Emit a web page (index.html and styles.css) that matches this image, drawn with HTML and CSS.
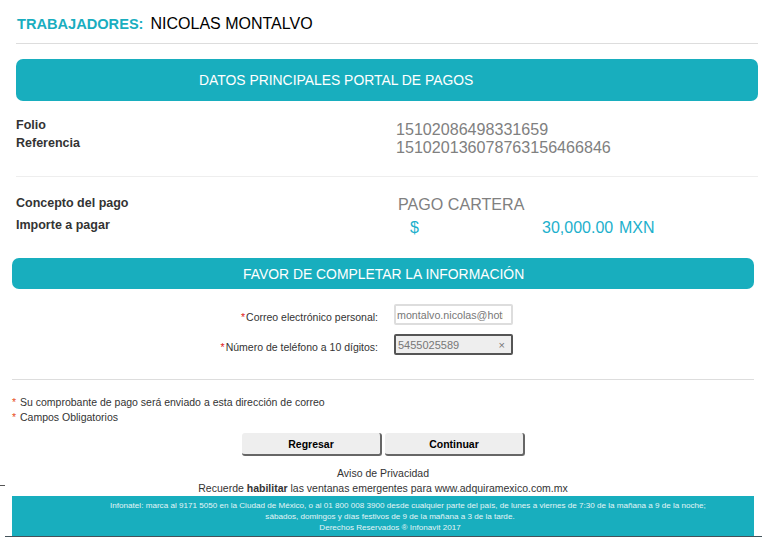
FILE: index.html
```html
<!DOCTYPE html>
<html lang="es">

<head>
  <meta charset="UTF-8">
  <meta name="viewport" content="width=device-width, initial-scale=1.0">
  <title>Portal de Pagos</title>
  <link rel="stylesheet" href="styles.css">
</head>

<body>
  <header class="titulo">
    <span class="titulo-label">TRABAJADORES:</span>
    <span class="titulo-nombre">NICOLAS MONTALVO</span>
  </header>

  <h2 class="banda banda-datos">DATOS PRINCIPALES PORTAL DE PAGOS</h2>

  <section class="fila fila-folio">
    <div class="etiquetas">
      <div>Folio</div>
      <div>Referencia</div>
    </div>
    <div class="valores">
      <div>15102086498331659</div>
      <div>151020136078763156466846</div>
    </div>
  </section>

  <section class="fila fila-pago">
    <div class="etiquetas">
      <div>Concepto del pago</div>
      <div>Importe a pagar</div>
    </div>
    <div class="pago">
      <div class="concepto">PAGO CARTERA</div>
      <div class="importe">
        <span class="signo">$</span>
        <span class="monto">30,000.00</span>
        <span class="moneda">MXN</span>
      </div>
    </div>
  </section>

  <h2 class="banda banda-favor">FAVOR DE COMPLETAR LA INFORMACIÓN</h2>

  <form class="datos">
    <label for="correo"><span class="req">*</span>Correo electrónico personal:</label>
    <input type="text" id="correo" value="montalvo.nicolas@hotmail.com">
    <label for="telefono"><span class="req">*</span>Número de teléfono a 10 dígitos:</label>
    <div class="campo-tel" id="telefono">
      <span class="tel-numero">5455025589</span>
      <span class="limpiar">×</span>
    </div>
  </form>

  <div class="notas">
    <div><span class="ast">*</span>Su comprobante de pago será enviado a esta dirección de correo</div>
    <div><span class="ast">*</span>Campos Obligatorios</div>
  </div>

  <div class="acciones">
    <button type="button">Regresar</button>
    <button type="button">Continuar</button>
  </div>

  <div class="aviso">
    <div>Aviso de Privacidad</div>
    <div>Recuerde <b>habilitar</b> las ventanas emergentes para www.adquiramexico.com.mx</div>
  </div>

  <span class="marca"></span>

  <footer class="pie">
    <div class="pie-primera">Infonatel: marca al 9171 5050 en la Ciudad de México, o al 01 800 008 3900 desde cualquier parte del país, de lunes a viernes de 7:30 de la mañana a 9 de la noche;</div>
    <div>sábados, domingos y días festivos de 9 de la mañana a 3 de la tarde.</div>
    <div>Derechos Reservados ® Infonavit 2017</div>
  </footer>
</body>

</html>
```

FILE: styles.css
```css
* {
  box-sizing: border-box;
  font-family: 'Liberation Sans', Arial, sans-serif;
}

body {
  position: relative;
  margin: 0;
  height: 542px;
  background-color: #fff;
  color: #222;
  overflow: hidden;
}

.titulo {
  display: flex;
  align-items: center;
  gap: 7px;
  height: 44px;
  margin: 0 16px;
  padding: 4px 0 0 1px;
  border-bottom: 1px solid #ddd;
  font-size: 16px;
}

.titulo-label {
  color: #19aebf;
  font-size: 14.6px;
  font-weight: bold;
}

.titulo-nombre {
  color: #000;
}

.banda {
  margin: 0;
  border-radius: 7px;
  background-color: #18aebe;
  color: #fff;
  font-size: 13.9px;
  font-weight: normal;
  display: flex;
  align-items: center;
}

.banda-datos {
  height: 42px;
  margin: 15px 16px 0;
  padding-left: 183px;
}

.banda-favor {
  height: 31px;
  margin: 0 20px 0 12px;
  padding-left: 231px;
}

.fila {
  display: flex;
  margin: 0 16px;
}

.fila-folio {
  height: 76px;
  padding-top: 15px;
  border-bottom: 1px solid #eee;
}

.fila-pago {
  height: 81px;
  padding-top: 17px;
}

.etiquetas {
  width: 380px;
  color: #333;
  font-size: 12.5px;
  font-weight: bold;
}

.fila-folio .etiquetas div {
  height: 18px;
  line-height: 18px;
}

.fila-pago .etiquetas div {
  height: 22px;
  line-height: 18px;
}

.valores {
  padding-top: 4px;
  color: #808080;
  font-size: 16.1px;
}

.valores div {
  height: 18px;
  line-height: 18px;
}

.pago {
  padding-left: 2px;
}

.concepto {
  height: 22px;
  padding-top: 1px;
  color: #808080;
  font-size: 16.1px;
  line-height: 18px;
}

.importe {
  display: flex;
  padding-top: 3px;
  color: #1cb0cc;
  font-size: 16px;
  line-height: 18px;
}

.signo {
  width: 144px;
  padding-left: 12px;
}

.monto {
  width: 77px;
}

.datos {
  display: grid;
  grid-template-columns: 366px 119px;
  grid-auto-rows: 21px;
  column-gap: 16px;
  row-gap: 9px;
  align-items: center;
  align-content: start;
  height: 91px;
  margin: 0 20px 0 12px;
  padding-top: 15px;
  border-bottom: 1px solid #ddd;
  font-size: 10.5px;
}

.datos label {
  justify-self: end;
  padding-top: 5px;
  color: #333;
}

.req {
  margin-right: 1px;
  color: #e02020;
}

.datos input {
  width: 119px;
  height: 21px;
  padding: 0 8px 0 1px;
  border: 2px solid #ddd;
  border-radius: 2px;
  color: #777;
  font-size: 10.7px;
}

.campo-tel {
  display: flex;
  align-items: center;
  justify-content: space-between;
  width: 119px;
  height: 21px;
  padding: 0 6px 0 2px;
  border: 2px solid #555;
  border-radius: 2px;
  background-color: #eee;
  color: #777;
  font-size: 11px;
}

.tel-numero {
  padding-top: 1px;
}

.limpiar {
  font-size: 11px;
}

.notas {
  height: 38px;
  margin: 15px 12px 0;
  color: #333;
  font-size: 10.5px;
  line-height: 15px;
}

.ast {
  display: inline-block;
  width: 8px;
  color: #e8501e;
}

.acciones {
  display: flex;
  gap: 3px;
  height: 23px;
  margin: 0 0 0 242px;
}

.acciones button {
  width: 140px;
  height: 23px;
  border: none;
  border-right: 2px solid #666;
  border-bottom: 2px solid #666;
  border-radius: 3px;
  background-color: #eee;
  color: #000;
  font-size: 10.5px;
  font-weight: bold;
}

.aviso {
  width: 766px;
  margin: 10px 0 0;
  color: #333;
  font-size: 10.5px;
  line-height: 15px;
  text-align: center;
}

.marca {
  position: absolute;
  left: 0;
  top: 485px;
  width: 5px;
  height: 1px;
  background-color: #555;
}

.pie {
  position: relative;
  width: 742px;
  height: 41px;
  margin: 0 0 0 12px;
  padding: 4px 0 0 14px;
  background-color: #18aebe;
  color: #e4f5f7;
  font-size: 8.1px;
  line-height: 11px;
  text-align: center;
}

.pie-primera {
  padding-left: 36px;
  white-space: nowrap;
}

.pie::after {
  content: "";
  position: absolute;
  left: -7px;
  right: -8px;
  bottom: 0;
  height: 1px;
  background-color: #44525a;
}
```
